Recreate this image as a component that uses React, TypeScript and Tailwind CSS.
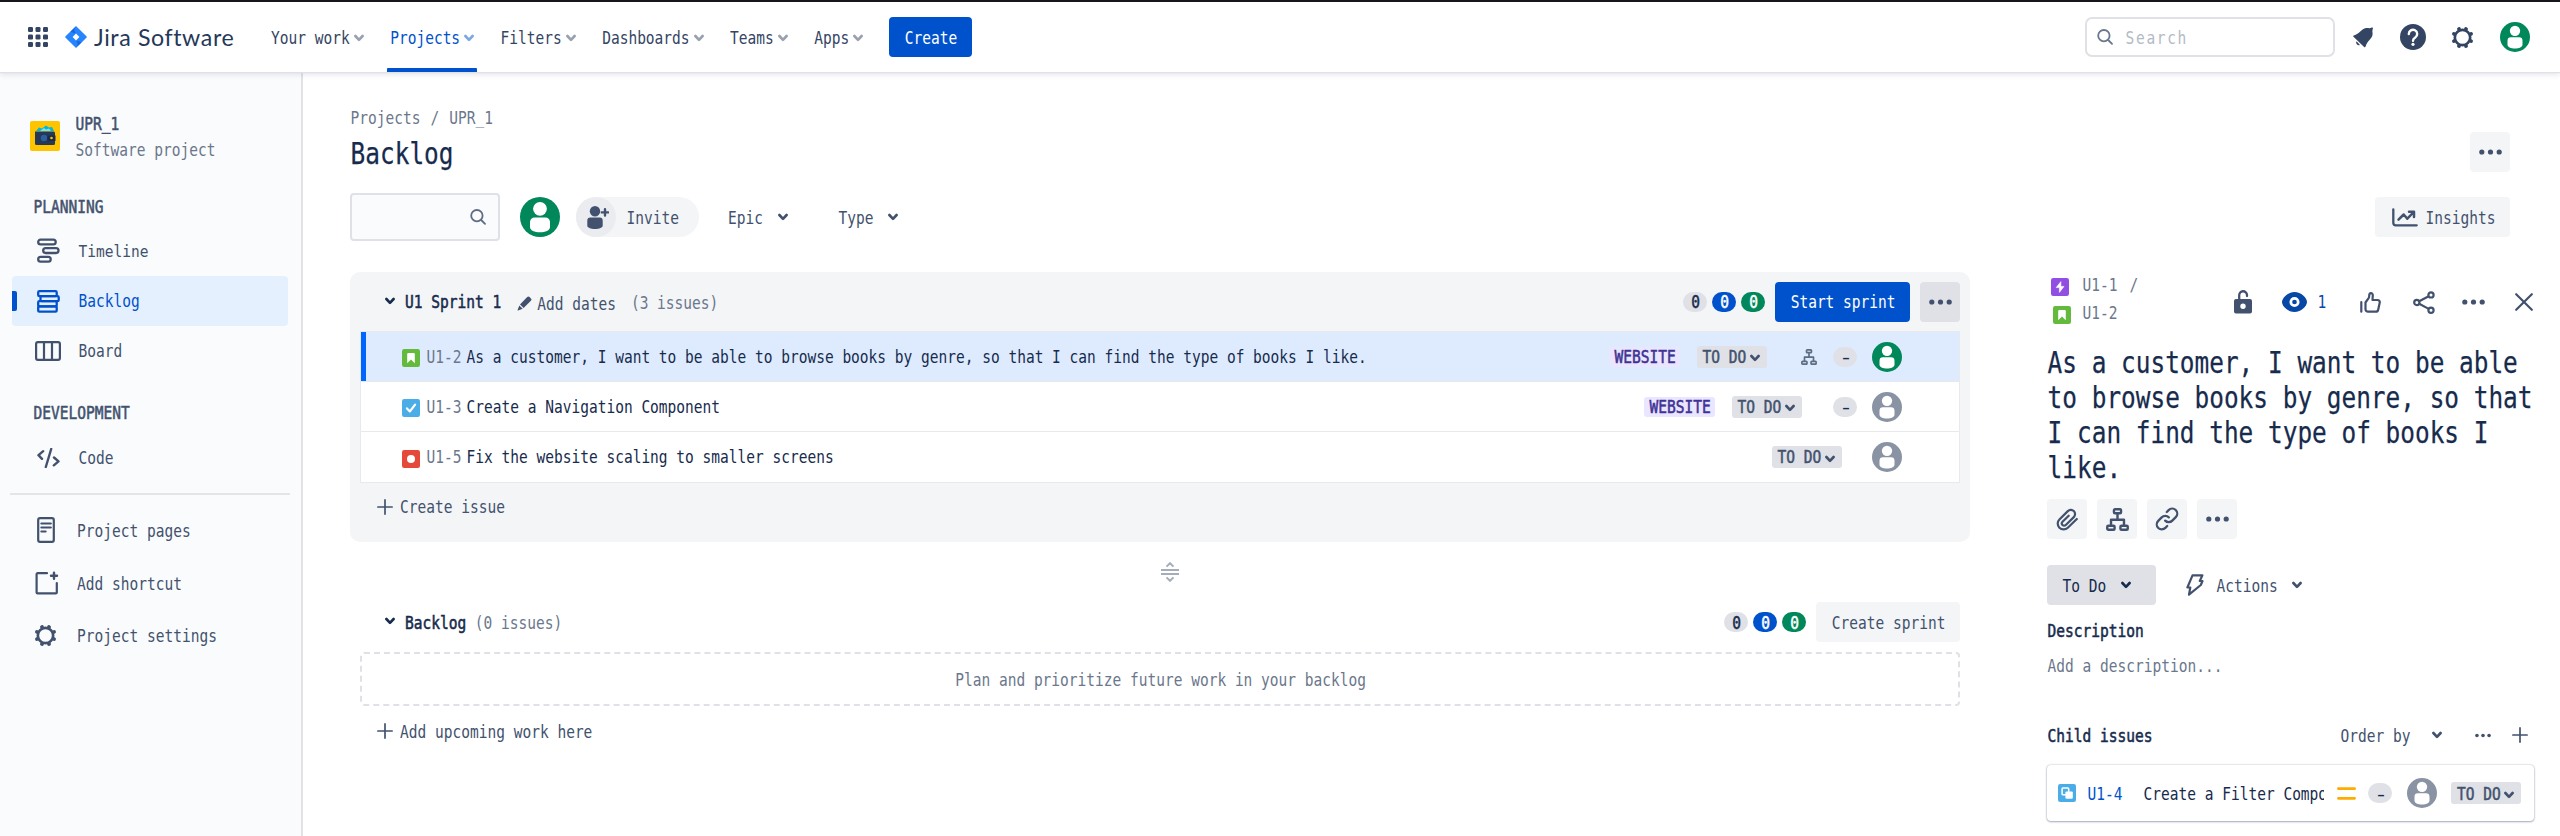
import React from 'react';
import clsx from 'clsx';

type P = { className?: string; children?: React.ReactNode };

/* Tall, narrow monospace text; glyphs are stretched vertically around the line's middle. */
const T = ({ className, children }: P) => (
  <span
    className={clsx(
      "block shrink-0 origin-center translate-x-[0.6px] translate-y-[0.4px] scale-y-[1.22] font-['DejaVu_Sans_Mono',monospace] text-[14.53px] leading-5 whitespace-pre",
      className,
    )}
  >
    {children}
  </span>
);

const medium = '[-webkit-text-stroke:0.45px_currentColor]';

const Chevron = ({ className }: P) => (
  <svg viewBox="0 0 10 8" className={clsx('h-[8px] w-[10px] shrink-0', className)} fill="none" stroke="currentColor" strokeWidth="2.6" strokeLinecap="round" strokeLinejoin="round">
    <path d="M1.4 2 5 5.9 8.6 2" />
  </svg>
);

const Dots = ({ className }: P) => (
  <svg viewBox="0 0 23 6" className={clsx('shrink-0', className ?? 'h-[6px] w-[23px]')} fill="currentColor">
    <circle cx="2.8" cy="3" r="2.6" />
    <circle cx="11.5" cy="3" r="2.6" />
    <circle cx="20.2" cy="3" r="2.6" />
  </svg>
);

const SearchIcon = ({ className }: P) => (
  <svg viewBox="0 0 16 16" className={clsx('size-4 shrink-0', className)} fill="none" stroke="currentColor" strokeWidth="1.8" strokeLinecap="round">
    <circle cx="6.9" cy="6.7" r="5.7" />
    <path d="m11.200 11 3.800 3.800" />
  </svg>
);

const Plus = ({ className }: P) => (
  <svg viewBox="0 0 16 16" className={clsx('size-4 shrink-0', className)} fill="none" stroke="currentColor" strokeWidth="1.7" strokeLinecap="round">
    <path d="M8 .9v14.2M.9 8h14.2" />
  </svg>
);

const Gear = ({ className }: P) => (
  <svg viewBox="0 0 24 24" className={clsx('shrink-0', className)} fill="none" stroke="currentColor">
    <circle cx="12" cy="12" r="8" strokeWidth="2.8" />
    <g strokeWidth="4" strokeLinecap="round">
      <path d="m15.6 3.4.1-.3M20.6 8.4l.3-.1M20.6 15.6l.3.1M15.6 20.6l.1.3M8.4 20.6l-.1.3M3.4 15.6l-.3.1M3.4 8.4l-.3-.1M8.4 3.4l-.1-.3" />
    </g>
  </svg>
);

const Avatar = ({ className }: P) => (
  <svg viewBox="0 0 40 40" className={clsx('shrink-0', className)}>
    <circle cx="20" cy="20" r="20" fill="currentColor" />
    <circle cx="20" cy="11.8" r="6.9" fill="#fff" />
    <path d="M10 25a4.6 4.6 0 0 1 4.6-4.6h10.8A4.6 4.6 0 0 1 30 25v5.2c0 3-4.6 5-10 5s-10-2-10-5z" fill="#fff" />
  </svg>
);

const Hierarchy = ({ className }: P) => (
  <svg viewBox="0 0 22 22" className={clsx('shrink-0', className)} fill="none" stroke="currentColor" strokeWidth="2.3" strokeLinejoin="round">
    <rect x="7.6" y="1.2" width="6.8" height="3.8" rx="1" />
    <rect x="1.2" y="17" width="7" height="3.8" rx="1" />
    <rect x="13.8" y="17" width="7" height="3.8" rx="1" />
    <path d="M11 5v6.2M4.8 17v-5.8h12.4V17" />
  </svg>
);

const Story = ({ className }: P) => (
  <svg viewBox="0 0 18 18" className={clsx('size-[18px] shrink-0', className)}>
    <rect width="18" height="18" rx="2.2" fill="#63ba3c" />
    <path d="M5.2 5a1 1 0 0 1 1-1h5.6a1 1 0 0 1 1 1v9.2L9 10.6l-3.8 3.6z" fill="#fff" />
  </svg>
);

const Task = ({ className }: P) => (
  <svg viewBox="0 0 18 18" className={clsx('size-[18px] shrink-0', className)}>
    <rect width="18" height="18" rx="2.2" fill="#4bade8" />
    <path d="m5 9.4 2.9 3 5.2-6.8" fill="none" stroke="#fff" strokeWidth="2.2" strokeLinecap="round" strokeLinejoin="round" />
  </svg>
);

const Bug = ({ className }: P) => (
  <svg viewBox="0 0 18 18" className={clsx('size-[18px] shrink-0', className)}>
    <rect width="18" height="18" rx="2.2" fill="#e5493a" />
    <circle cx="9" cy="9" r="4" fill="#fff" />
  </svg>
);

const Epic = ({ className }: P) => (
  <svg viewBox="0 0 18 18" className={clsx('size-[18px] shrink-0', className)}>
    <rect width="18" height="18" rx="2.2" fill="#904ee2" />
    <path d="M9.9 3.6 5.2 9.6h3.2v4.8l4.6-6H9.9z" fill="#fff" stroke="#fff" strokeWidth=".6" strokeLinejoin="round" />
  </svg>
);

const Subtask = ({ className }: P) => (
  <svg viewBox="0 0 18 18" className={clsx('size-[18px] shrink-0', className)}>
    <rect width="18" height="18" rx="2.2" fill="#4bade8" />
    <rect x="4.1" y="4.1" width="6.6" height="6.6" rx=".8" fill="none" stroke="#fff" strokeWidth="1.5" />
    <rect x="7.4" y="7.4" width="7.4" height="7.4" rx="1.2" fill="#fff" />
  </svg>
);

const Pencil = () => (
  <svg viewBox="0 0 15 15" className="size-[15px] shrink-0" fill="currentColor">
    <path d="M10.2 1.1a1.7 1.7 0 0 1 2.4 0l1.3 1.3a1.7 1.7 0 0 1 0 2.4L6.6 12 3 8.4zM2.3 9.4l3.4 3.4L1 14.4c-.3.1-.5-.1-.4-.4z" />
  </svg>
);

const Status = ({ className }: P) => (
  <span className={clsx('flex h-[22px] w-[70px] shrink-0 items-center rounded-[3px] bg-[#dfe1e6] pl-[5px] text-[#42526e]', className)}>
    <T className={medium}>TO DO</T>
    <Chevron className="mt-[3px] ml-[4px]" />
  </span>
);

const Tag = ({ className }: P) => (
  <span className={clsx('flex h-5 w-[71px] shrink-0 items-center justify-center rounded-[3px] bg-[#eae6ff] text-[#403294]', className)}>
    <T className={medium}>WEBSITE</T>
  </span>
);

const Dash = ({ className }: P) => (
  <span className={clsx('flex h-5 w-6 shrink-0 items-center justify-center rounded-full bg-[#dfe1e6] text-[#172b4d]', className)}>
    <T className="scale-x-[1.6]">-</T>
  </span>
);

const Counts = () => (
  <div className="flex gap-[5px]">
    {['bg-[#dfe1e6] text-[#172b4d]', 'bg-[#0052cc] text-white', 'bg-[#00875a] text-white'].map((c) => (
      <span key={c} className={clsx('flex h-5 w-6 items-center justify-center rounded-full', c)}>
        <T className={medium}>0</T>
      </span>
    ))}
  </div>
);

const nav = ['Your work', 'Projects', 'Filters', 'Dashboards', 'Teams', 'Apps'];

const Header = () => (
  <header className="relative z-10 flex h-[70px] shrink-0 items-center bg-white text-[#344563] shadow-[0_1px_1px_#dfe1e6,0_3px_5px_rgba(9,30,66,0.10)]">
    <svg viewBox="0 0 20 20" className="ml-7 size-5 shrink-0" fill="currentColor">
      {[0, 7.5, 15].map((y) => [0, 7.5, 15].map((x) => <rect key={`${x}-${y}`} x={x} y={y} width="5" height="5" rx="1.2" />))}
    </svg>
    <svg viewBox="0 0 22 22" className="ml-[17px] size-[22px] shrink-0">
      <path d="M11 0 21.4 10.3a1 1 0 0 1 0 1.4L11 22 .6 11.7a1 1 0 0 1 0-1.4z" fill="#2684ff" />
      <path d="M11 7.5a5 5 0 0 1 0-7.3L5.5 5.8z" fill="#1667e0" />
      <path d="M11 14.5a5 5 0 0 1 0 7.3l5.5-5.6z" fill="#1667e0" />
      <path d="m11 7.6 3.4 3.4-3.4 3.4L7.6 11z" fill="#fff" />
    </svg>
    <span className="ml-[7px] w-[176.5px] shrink-0 font-['Lato',sans-serif] text-[23.2px] leading-7 tracking-[0.6px] whitespace-pre text-[#253858]">Jira Software</span>
    <nav className="flex h-full">
      {nav.map((n, i) => (
        <a key={n} className={clsx('relative mr-[25.7px] flex items-center', i === 1 && 'text-[#0052cc]')}>
          <T>{n}</T>
          <Chevron className="mt-px ml-[4.75px] opacity-50" />
          {i === 1 && <span className="absolute bottom-0 -left-[3px] h-1 w-[90px] rounded-t-[1px] bg-[#0052cc]" />}
        </a>
      ))}
    </nav>
    <button className="flex h-10 w-[83px] items-center justify-center rounded-[4px] bg-[#0052cc] text-white">
      <T>Create</T>
    </button>
    <div className="ml-auto flex h-10 w-[250px] items-center rounded-[7px] border-2 border-[#dfe1e6] pl-[10px]">
      <SearchIcon className="text-[#6b778c]" />
      <T className="ml-3 tracking-[1.65px] text-[#b3bac5]">Search</T>
    </div>
    <svg viewBox="0 0 21 21" className="ml-[18px] size-[21px] shrink-0" fill="currentColor">
      <path d="M.8 8.4C6.500 6.800 8.500 2 12.200 1.200c2.200-.5 3.500.2 4.500 0L18.800.6c.8-.2 1.300.3 1.100 1l-.5 1.900c-.3 1.100.5 2.300.1 4.500-.8 4-5.500 6-6.900 11.600-.2.800-.9 1-1.500.4L.5 9.700c-.5-.5-.4-1.100.3-1.300z" />
      <path d="M3.400 14.200a2.700 2.700 0 0 0 3.500 3.700l-1.700-1.900z" />
    </svg>
    <svg viewBox="0 0 26 26" className="ml-[26px] size-[26px] shrink-0">
      <circle cx="13" cy="13" r="13" fill="currentColor" />
      <path d="M8.800 10a4.200 4.200 0 1 1 6.500 3.500c-1.500 1-2.300 1.500-2.300 3.200" fill="none" stroke="#fff" strokeWidth="2.400" strokeLinecap="round" />
      <circle cx="13" cy="20.300" r="1.600" fill="#fff" />
    </svg>
    <Gear className="ml-[25px] size-[23px]" />
    <Avatar className="mr-[30px] ml-[26px] size-[30px] text-[#00875a]" />
  </header>
);

const TimelineIcon = () => (
  <svg viewBox="0 0 23 26" className="h-[26px] w-[23px]" fill="none" stroke="currentColor" strokeWidth="2.3">
    <rect x="1.200" y="1.600" width="17.500" height="4.800" rx="2.400" />
    <rect x="6.200" y="10.200" width="15.300" height="4.800" rx="2.400" />
    <rect x="1.200" y="18.900" width="12.500" height="4.800" rx="2.400" />
  </svg>
);
const BacklogIcon = () => (
  <svg viewBox="0 0 23 23" className="size-[23px]" fill="none" stroke="currentColor" strokeWidth="2.300">
    <rect x="1.200" y="1.200" width="18.500" height="5" rx="1.200" />
    <rect x="3.500" y="6.200" width="18.200" height="5" rx="1.200" />
    <rect x="1.200" y="11.200" width="18.500" height="5.200" rx="1.200" />
    <rect x="1.200" y="16.400" width="18.500" height="5.200" rx="1.200" />
  </svg>
);
const BoardIcon = () => (
  <svg viewBox="0 0 26 20" className="-mx-0.5 h-5 w-[26px]" fill="none" stroke="currentColor" strokeWidth="2.200">
    <rect x="1.100" y="1.100" width="23.800" height="17.800" rx="1.800" />
    <path d="M9 1v18M17 1v18" />
  </svg>
);
const CodeIcon = () => (
  <svg viewBox="0 0 23 20" className="h-5 w-[23px]" fill="none" stroke="currentColor" strokeWidth="2.400" strokeLinecap="round" strokeLinejoin="round">
    <path d="M6.200 3.200 1.500 7.200l3.500 3.600M14.200 1 8.800 19M17 9.500l4.500 3.900-4.700 3.900" />
  </svg>
);
const PageIcon = () => (
  <svg viewBox="0 0 18 26" className="ml-[1px] h-[26px] w-[18px]" fill="none" stroke="currentColor" strokeWidth="2.200">
    <rect x="1.200" y="1.200" width="15.600" height="23.600" rx="1.800" />
    <path d="M4.300 6.600h9.600M4.300 10.600h9.600M4.300 14.400h4.400" strokeWidth="2" strokeLinecap="round" />
  </svg>
);
const ShortcutIcon = () => (
  <svg viewBox="0 0 24 24" className="-ml-[1.500px] size-6" fill="none" stroke="currentColor" strokeWidth="2.200" strokeLinecap="round">
    <path d="M12 2.200H2.600a1 1 0 0 0-1 1v18.200a1 1 0 0 0 1 1h18.200a1 1 0 0 0 1-1V12" />
    <path d="M19 1.800v6M16 4.800h6" strokeWidth="2.400" />
  </svg>
);

const SideItem = ({ icon, label, active }: { icon: React.ReactNode; label: string; active?: boolean }) => (
  <div className={clsx('relative mx-3 flex h-[50px] items-center rounded-[4px] pl-[25px]', active ? 'w-[276px] bg-[#e4f0fe] text-[#0052cc]' : 'text-[#42526e]')}>
    {active && <span className="absolute left-0 h-5 w-[5px] rounded-r-[2px] bg-[#0052cc]" />}
    <span className="flex w-[41px] items-center">{icon}</span>
    <T>{label}</T>
  </div>
);

const Sidebar = () => (
  <aside className="flex w-[303px] shrink-0 flex-col border-r-2 border-[#e1e2e6] bg-[#fafbfc] pt-[38px] text-[#42526e]">
    <div className="flex h-[52px] items-center pl-[30px]">
      <svg viewBox="0 0 30 30" className="size-[30px]">
        <rect width="30" height="30" rx="2" fill="#ffc400" />
        <path d="M6 10 9 6.500l3 1L16 4.500l3 2 3-.5 2 4z" fill="#00b8d9" />
        <path d="M10 10 14 7l2 1.500L19 7.500l2 2.500z" fill="#79e2f2" />
        <path d="M5 10.500h18.500a1.500 1.500 0 0 1 1.500 1.500v10.500a1.500 1.500 0 0 1-1.500 1.500H6.500A1.500 1.500 0 0 1 5 22.500z" fill="#253858" />
        <circle cx="14" cy="17" r="3.200" fill="#2d5f9e" />
        <path d="M20 14.500h5.500V20H20a2.700 2.700 0 0 1 0-5.500z" fill="#172b4d" />
        <circle cx="21.500" cy="17" r="1.300" fill="#ffc400" />
      </svg>
      <div className="ml-[15px] flex flex-col gap-[6px]">
        <T className={medium}>UPR_1</T>
        <T className="text-[#6b778c]">Software project</T>
      </div>
    </div>
    <T className={clsx(medium, 'mt-[34px] ml-[33px]')}>PLANNING</T>
    <div className="mt-[10px]">
      <SideItem icon={<TimelineIcon />} label="Timeline" />
      <SideItem icon={<BacklogIcon />} label="Backlog" active />
      <SideItem icon={<BoardIcon />} label="Board" />
    </div>
    <T className={clsx(medium, 'mt-[26.500px] ml-[33px]')}>DEVELOPMENT</T>
    <div className="mt-[10.500px]">
      <SideItem icon={<CodeIcon />} label="Code" />
    </div>
    <div className="mt-[10px] ml-[10px] h-[2px] w-[280px] bg-[#e4e5e9]" />
    <div className="mt-[9px] flex flex-col">
      {[
        { l: 'Project pages', i: <PageIcon /> },
        { l: 'Add shortcut', i: <ShortcutIcon /> },
        { l: 'Project settings', i: <Gear className="-ml-[2px] size-[23px]" /> },
      ].map(({ l, i }) => (
        <div key={l} className="flex h-[52.500px] items-center pl-9">
          <span className="flex w-[40.500px]">{i}</span>
          <T>{l}</T>
        </div>
      ))}
    </div>
  </aside>
);

const Row = ({ icon, id, text, active, children }: { icon: React.ReactNode; id: string; text: string; active?: boolean; children: React.ReactNode }) => (
  <div className={clsx('flex h-[50px] items-center border-b border-[#e8e9ed] last:h-[51px]', active ? 'bg-[#deebff]' : 'bg-white')}>
    <span className={clsx('h-full w-[5px]', active && 'bg-[#0065ff]')} />
    <span className="mt-[3px] mr-[6px] ml-9">{icon}</span>
    <T className="w-10 text-[#6b778c]">{id}</T>
    <T className="text-[#172b4d]">{text}</T>
    <div className="ml-auto flex items-center pr-[57px]">{children}</div>
  </div>
);

const Toolbar = () => (
  <div className="mt-[21px] flex h-12 items-center text-[#42526e]">
    <div className="flex h-12 w-[150px] items-center justify-end rounded-[4px] border-2 border-[#dfe1e6] bg-[#fafbfc] pr-[12px]">
      <SearchIcon className="text-[#5e6c84]" />
    </div>
    <Avatar className="ml-5 size-10 text-[#00875a]" />
    <div className="ml-4 flex h-10 w-[123px] items-center rounded-full bg-[#f4f5f7]">
      <span className="flex size-10 items-center justify-center rounded-full bg-[#ebecf0]">
        <svg viewBox="0 0 22 23" className="ml-[3px] h-[23px] w-[22px]" fill="currentColor">
          <circle cx="8" cy="5.300" r="5.200" />
          <path d="M.3 14.500a3 3 0 0 1 3-3h9.400a3 3 0 0 1 3 3v5.200c0 1.800-3.300 3.200-7.700 3.200S.3 21.500.3 19.700z" />
          <path d="M18 3.200v6.400M14.800 6.400h6.400" stroke="currentColor" strokeWidth="2.400" strokeLinecap="round" />
        </svg>
      </span>
      <T className="ml-[10px]">Invite</T>
    </div>
    <T className="ml-[28.500px]">Epic</T>
    <Chevron className="ml-[15.500px]" />
    <T className="ml-[50px]">Type</T>
    <Chevron className="ml-[15px]" />
    <button className="ml-auto flex h-10 w-[135px] items-center rounded-[4px] bg-[#f4f5f7] pl-[17px]">
      <svg viewBox="0 0 26 19" className="h-[19px] w-[26px]" fill="none" stroke="currentColor" strokeWidth="2.300" strokeLinecap="round" strokeLinejoin="round">
        <path d="M1.300 1.300v13.500a2.500 2.500 0 0 0 2.500 2.500h20.900" />
        <path d="m6.500 11.700 5.200-5.200 3.600 4.200 6-6.200M17 3.700h5v5.200" strokeWidth="2.500" />
      </svg>
      <T className="ml-[7px]">Insights</T>
    </button>
  </div>
);

const Board = () => (
  <section className="w-[1620px] shrink-0">
    <div className="flex h-[270px] flex-col rounded-[10px] bg-[#f4f5f7] px-[10px] pt-[10px]">
      <div className="flex h-10 items-center pl-[25px] text-[#172b4d]">
        <Chevron className="-mt-0.5" />
        <T className={clsx(medium, 'ml-[9.500px]')}>U1 Sprint 1</T>
        <span className="mt-[3px] ml-4 flex items-center text-[#42526e]">
          <Pencil />
          <T className="ml-[5px]">Add dates</T>
        </span>
        <T className="mt-px ml-[15px] text-[#6b778c]">(3 issues)</T>
        <div className="ml-auto flex items-center gap-[10px]">
          <Counts />
          <button className="flex h-10 w-[135px] items-center justify-center rounded-[4px] bg-[#0052cc] text-white">
            <T>Start sprint</T>
          </button>
          <button className="flex size-10 items-center justify-center rounded-[4px] bg-[#dfe1e6] text-[#42526e]">
            <Dots />
          </button>
        </div>
      </div>
      <div className="mt-[9px] border border-b-0 border-[#e8e9ed]">
        <Row active icon={<Story />} id="U1-2" text="As a customer, I want to be able to browse books by genre, so that I can find the type of books I like.">
          <Tag />
          <Status className="ml-[17px]" />
          <Hierarchy className="ml-[34px] size-4 text-[#5e6c84]" />
          <Dash className="ml-4" />
          <Avatar className="ml-[15px] size-[30px] text-[#00875a]" />
        </Row>
        <Row icon={<Task />} id="U1-3" text="Create a Navigation Component">
          <Tag />
          <Status className="ml-[17px]" />
          <Dash className="ml-[31px]" />
          <Avatar className="ml-[15px] size-[30px] text-[#8993a4]" />
        </Row>
        <Row icon={<Bug />} id="U1-5" text="Fix the website scaling to smaller screens">
          <Status />
          <Avatar className="ml-[30px] size-[30px] text-[#8993a4]" />
        </Row>
      </div>
      <div className="mt-[14px] flex items-center pl-[17px] text-[#42526e]">
        <Plus />
        <T className="ml-[6.500px]">Create issue</T>
      </div>
    </div>
    <div className="flex h-[60px] items-center justify-center pl-5 text-[#a5adba]">
      <svg viewBox="0 0 18 20" className="h-5 w-[18px]" fill="none" stroke="currentColor" strokeWidth="2">
        <path d="M0 8h18M0 12h18" />
        <path d="M5.500 4.600 9 1.200l3.500 3.400M5.500 15.400 9 18.800l3.500-3.400" />
      </svg>
    </div>
    <div className="px-[10px]">
      <div className="flex h-10 items-center pl-[25px] text-[#172b4d]">
        <Chevron className="-mt-0.5" />
        <T className={clsx(medium, 'ml-[9.500px]')}>Backlog</T>
        <T className="ml-[8.500px] text-[#6b778c]">(0 issues)</T>
        <div className="ml-auto flex items-center gap-[10px]">
          <Counts />
          <button className="flex h-10 w-[144px] items-center justify-center rounded-[4px] bg-[#f4f5f7] text-[#42526e]">
            <T>Create sprint</T>
          </button>
        </div>
      </div>
      <div className="mt-[10px] flex h-[54px] items-center justify-center rounded-[4px] border-2 border-dashed border-[#dfe1e6] text-[#6b778c]">
        <T>Plan and prioritize future work in your backlog</T>
      </div>
      <div className="mt-[15px] flex items-center pl-[17px] text-[#42526e]">
        <Plus />
        <T className="ml-[6.500px]">Add upcoming work here</T>
      </div>
    </div>
  </section>
);

const headline = ['As a customer, I want to be able', 'to browse books by genre, so that', 'I can find the type of books I', 'like.'];

const iconButton = 'flex size-10 items-center justify-center rounded-[4px] bg-[#f4f5f7]';

const Detail = () => (
  <section className="ml-[77px] w-[487px] shrink-0 text-[#42526e]">
    <div className="flex h-[64px]">
      <div className="flex w-[187px] flex-col gap-2 pt-[3px] text-[#6b778c]">
        <div className="flex h-5 items-center">
          <Epic className="mt-[3px] ml-1" />
          <T className="ml-[13px]">U1-1</T>
          <T className="ml-[12px]">/</T>
        </div>
        <div className="flex h-5 items-center">
          <Story className="mt-[3px] ml-[6px]" />
          <T className="ml-[11px]">U1-2</T>
        </div>
      </div>
      <div className="flex h-[60px] items-center">
        <svg viewBox="0 0 18 24" className="h-6 w-[18px]" fill="currentColor">
          <path fillRule="evenodd" d="M2 9h14a2 2 0 0 1 2 2v10.500a2 2 0 0 1-2 2H2a2 2 0 0 1-2-2V11a2 2 0 0 1 2-2zm7 4.500a2.700 2.700 0 1 0 0 5.400 2.700 2.700 0 0 0 0-5.400z" />
          <path d="M5.200 9V5.300a3.900 3.900 0 0 1 7.800-.3v1" fill="none" stroke="currentColor" strokeWidth="2.300" strokeLinecap="round" />
        </svg>
        <svg viewBox="0 0 25 20" className="ml-[30px] h-5 w-[25px] text-[#0747a6]">
          <path d="M12.500 0C19 0 25 6 25 10s-6 10-12.500 10S0 14 0 10 6 0 12.500 0z" fill="currentColor" />
          <circle cx="12.500" cy="10" r="3.700" fill="none" stroke="#fff" strokeWidth="2.700" />
        </svg>
        <T className="ml-[10px] text-[#0747a6]">1</T>
        <svg viewBox="0 0 21 21" className="ml-[34.500px] size-[21px]" fill="none" stroke="currentColor" strokeWidth="2.200" strokeLinecap="round" strokeLinejoin="round">
          <path d="M5.500 10.500 8.600 6.200c.4-.6.600-1.300.6-2.200 0-1.700.5-2.800 1.700-2.800s2 1 1.900 2.300L12.500 8h5a2.200 2.200 0 0 1 2.200 2.700l-1.500 7a2.500 2.500 0 0 1-2.500 2H8a2.500 2.500 0 0 1-2.500-2.500z" />
          <path d="M1.300 10v9.700" strokeWidth="2.200" />
        </svg>
        <svg viewBox="0 0 22 23" className="ml-8 h-[23px] w-[22px]" fill="none" stroke="currentColor" strokeWidth="2.200">
          <circle cx="3.800" cy="11.500" r="2.600" />
          <circle cx="18" cy="3.900" r="2.600" />
          <circle cx="18" cy="19.200" r="2.600" />
          <path d="m6.200 10.200 9.500-5M6.200 12.800l9.500 5.100" />
        </svg>
        <Dots className="ml-[27px] h-[6px] w-[23px]" />
        <svg viewBox="0 0 18 18" className="ml-[29.500px] size-[18px]" fill="none" stroke="currentColor" strokeWidth="2.200" strokeLinecap="round">
          <path d="m1.200 1.200 15.600 15.600M16.800 1.200 1.200 16.800" />
        </svg>
      </div>
    </div>
    <h2 className="mt-[8px] text-[#172b4d]">
      {headline.map((l) => (
        <T key={l} className="scale-y-[1.25] text-[24.42px] leading-[35px] [-webkit-text-stroke:0.2px_currentColor]">{l}</T>
      ))}
    </h2>
    <div className="mt-[15px] flex gap-[10px]">
      <span className={iconButton}>
        <svg viewBox="0 0 22 23" className="h-[23px] w-[22px]" fill="none" stroke="currentColor" strokeWidth="2.200" strokeLinecap="round" strokeLinejoin="round">
          <path d="m20.800 11-9 8.700a5.900 5.900 0 0 1-8.400 0 5.900 5.900 0 0 1 0-8.300l8.400-8.300a4.200 4.200 0 0 1 6 0 4.200 4.200 0 0 1 0 6l-8 7.900a2.300 2.300 0 0 1-3.300 0 2.300 2.300 0 0 1 0-3.200l6.200-6.100" />
        </svg>
      </span>
      <span className={iconButton}>
        <Hierarchy className="h-[23px] w-[23px]" />
      </span>
      <span className={iconButton}>
        <svg viewBox="0 0 24 24" className="size-[26px]" fill="none" stroke="currentColor" strokeWidth="2.100" strokeLinecap="round" strokeLinejoin="round">
          <path d="M10.300 13.500a4.600 4.600 0 0 0 6.600 0l3.200-3.200a4.600 4.600 0 0 0-6.600-6.500L11.800 5.500" />
          <path d="M13.700 10.500a4.600 4.600 0 0 0-6.600 0l-3.200 3.200a4.600 4.600 0 0 0 6.600 6.500l1.700-1.700" />
        </svg>
      </span>
      <span className={iconButton}>
        <Dots />
      </span>
    </div>
    <div className="mt-[26px] flex h-10 items-center">
      <button className="flex h-10 w-[109px] items-center rounded-[4px] bg-[#dfe1e6] pl-[15px] text-[#172b4d]">
        <T>To Do</T>
        <Chevron className="ml-[15px]" />
      </button>
      <svg viewBox="0 0 18 22" className="ml-[30px] h-[22px] w-[18px]" fill="none" stroke="currentColor" strokeWidth="2.200" strokeLinejoin="round">
        <path d="M6.500 1.300h9.900L13.800 7h2.700l-1.700 4L3 20.700l1.300-7.200H1.400z" />
      </svg>
      <T className="ml-[12px]">Actions</T>
      <Chevron className="ml-[15px]" />
    </div>
    <T className={clsx(medium, 'mt-[15px] text-[#172b4d]')}>Description</T>
    <T className="mt-[15px] text-[#6b778c]">Add a description...</T>
    <div className="mt-[50px] flex h-5 items-center">
      <T className={clsx(medium, 'text-[#172b4d]')}>Child issues</T>
      <T className="ml-[188px]">Order by</T>
      <Chevron className="ml-[22.500px]" />
      <Dots className="ml-[33px] h-[5px] w-4" />
      <Plus className="ml-[21px]" />
    </div>
    <div className="mt-5 flex h-[56px] items-center rounded-[4px] bg-white pl-[11px] text-[#172b4d] shadow-[0_1px_2px_rgba(9,30,66,0.3),0_0_2px_rgba(9,30,66,0.32)]">
      <Subtask />
      <T className="ml-[11px] text-[#0052cc]">U1-4</T>
      <div className="ml-[21px] flex h-8 w-[181px] items-center overflow-hidden">
        <T>Create a Filter Component</T>
      </div>
      <svg viewBox="0 0 19 13" className="ml-[13.500px] h-[13px] w-[19px]" stroke="#ffab00" strokeWidth="2.700" strokeLinecap="round">
        <path d="M1.400 1.700h16.200M1.400 11.300h16.200" />
      </svg>
      <Dash className="ml-3" />
      <Avatar className="ml-[14.500px] size-[30px] text-[#8993a4]" />
      <Status className="ml-[14.500px]" />
    </div>
  </section>
);

export default function App() {
  return (
    <div className="flex h-[836px] w-[2560px] flex-col overflow-hidden bg-white">
      <div className="h-[2px] shrink-0 bg-[#17171c]" />
      <Header />
      <div className="flex min-h-0 flex-1">
        <Sidebar />
        <main className="ml-[47px] flex w-[2210px] flex-col pt-[35px]">
          <div className="flex gap-[10px] text-[#6b778c]">
            <T>Projects</T>
            <T>/</T>
            <T>UPR_1</T>
          </div>
          <div className="mt-[5px] flex h-10 items-center justify-between pr-[50px]">
            <T className="scale-y-[1.25] text-[24.42px] leading-[35px] text-[#172b4d] [-webkit-text-stroke:0.2px_currentColor]">Backlog</T>
            <button className="flex size-10 items-center justify-center rounded-[4px] bg-[#f4f5f7] text-[#42526e]">
              <Dots />
            </button>
          </div>
          <div className="pr-[50px]">
            <Toolbar />
          </div>
          <div className="mt-[31px] flex">
            <Board />
            <Detail />
          </div>
        </main>
      </div>
    </div>
  );
}
